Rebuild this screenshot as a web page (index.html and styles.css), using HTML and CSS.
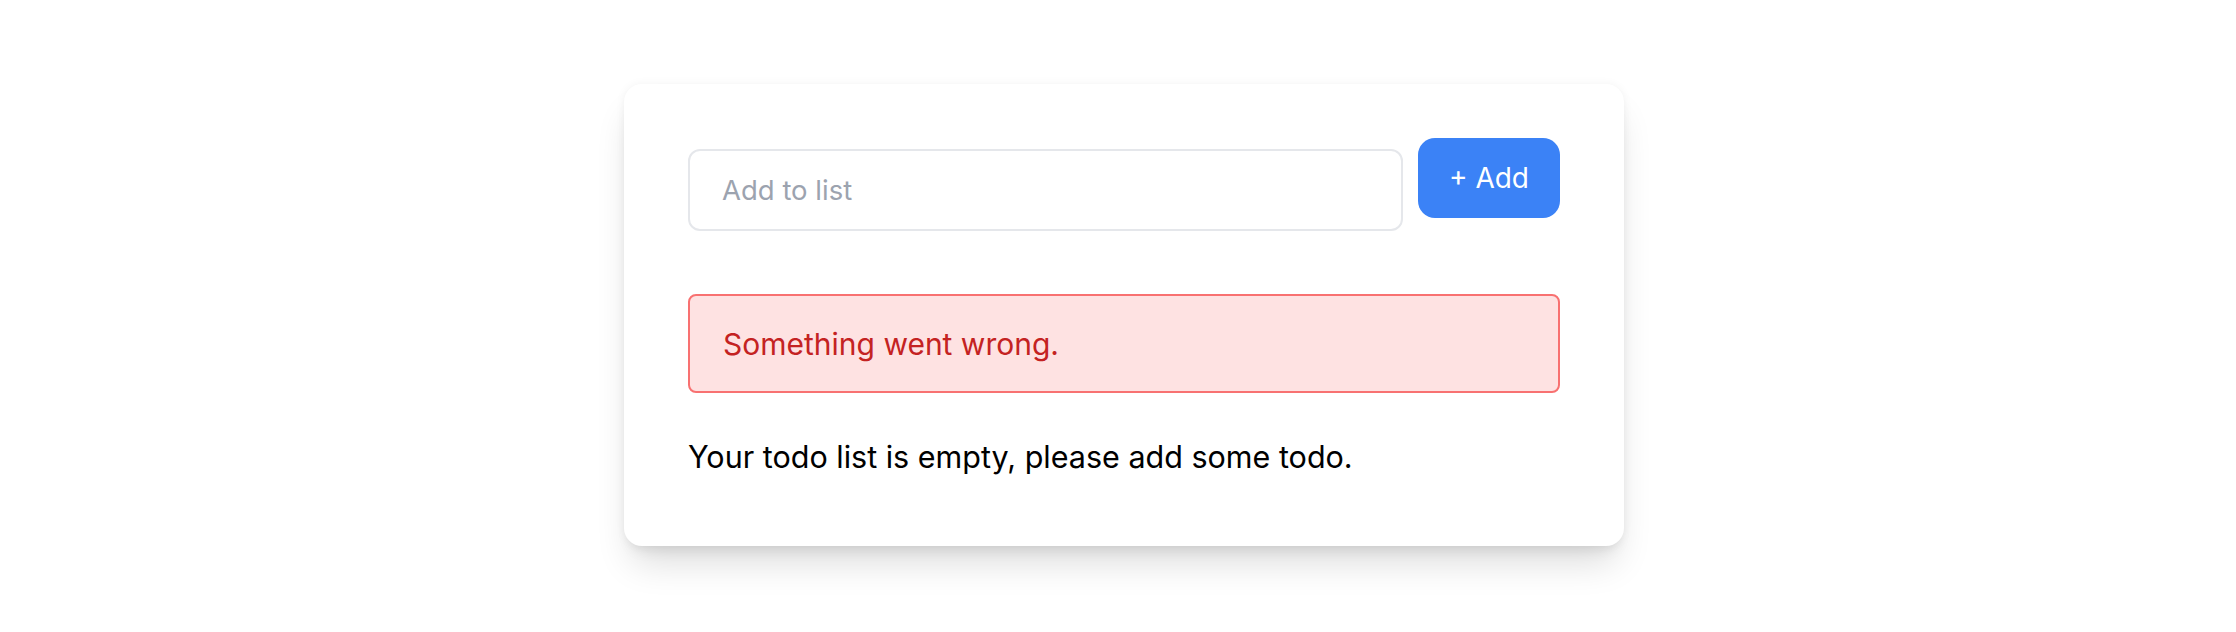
FILE: index.html
```html
<!DOCTYPE html>
<html lang="en">
<head>
    <meta charset="UTF-8">
    <meta name="viewport" content="width=device-width, initial-scale=1.0">
    <title>Todo List</title>
    <link rel="stylesheet" href="styles.css">
</head>
<body>
    <div class="page">
        <div class="card">
            <form class="add-form">
                <input type="text" class="todo-input" placeholder="Add to list">
                <button type="submit" class="add-btn">+ Add</button>
            </form>
            <div class="error-box">Something went wrong.</div>
            <p class="empty-msg">Your todo list is empty, please add some todo.</p>
        </div>
    </div>
</body>
</html>
```

FILE: styles.css
```css
body {
    margin: 0;
    min-height: 100vh;
    font-family: Inter, "Noto Sans", Arial, sans-serif;
    background-color: #ffffff;
}

.page {
    display: flex;
    justify-content: center;
    align-items: flex-start;
    padding: 84px 0 80px 12px;
}

.card {
    width: 1000px;
    box-sizing: border-box;
    padding: 54px 64px 65px;
    background-color: white;
    border-radius: 18px;
    /* soft drop shadow, heavier below */
    box-shadow: 0 24px 36px -8px rgba(0,0,0,0.14), 0 10px 14px -6px rgba(0,0,0,0.08), 0 0 10px rgba(0,0,0,0.05);
}

.add-form {
    display: flex;
    align-items: flex-start;
    gap: 15px;
}

.todo-input {
    flex: 1;
    height: 82px;
    margin-top: 11px;
    box-sizing: border-box;
    padding: 0 32px;
    border: 2px solid #e5e7eb;
    border-radius: 12px;
    font-family: inherit;
    font-size: 27.5px;
    color: #111827;
    outline: none;
}

.todo-input::placeholder {
    color: #9ca3af;
}

.add-btn {
    width: 142px;
    height: 80px;
    border: none;
    border-radius: 17px;
    background-color: #3b82f6;
    color: white;
    font-family: inherit;
    font-size: 28px;
    cursor: pointer;
}

.error-box {
    margin-top: 63px;
    height: 99px;
    box-sizing: border-box;
    display: flex;
    align-items: center;
    padding: 0 33px;
    background-color: #fee2e2;
    border: 2px solid #f87171;
    border-radius: 8px;
    color: #c42222;
    font-size: 30px;
}

.empty-msg {
    margin: 40px 0 0;
    font-size: 30.5px;
    line-height: 48px;
    color: #000;
}
```
